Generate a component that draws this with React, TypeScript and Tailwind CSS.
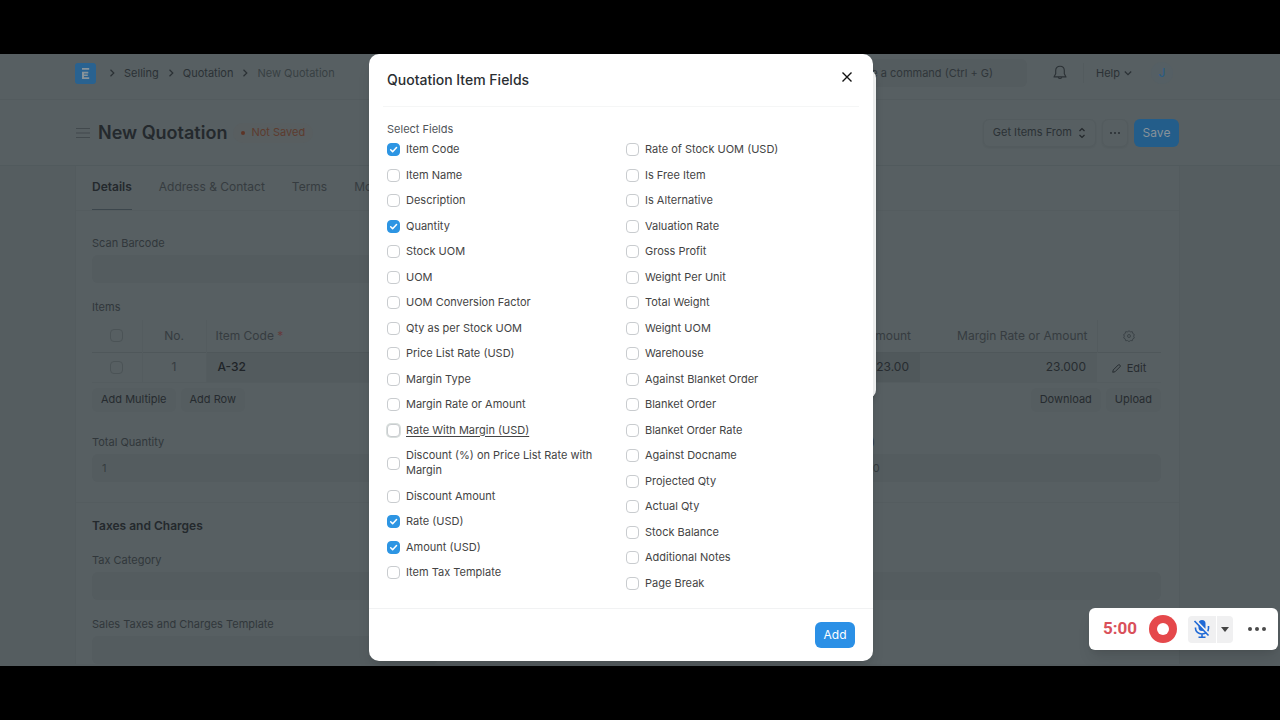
import { useState } from "react";
import type { ReactNode } from "react";

type Field = { label: string; checked?: boolean; hovered?: boolean };

const LEFT_FIELDS: Field[] = [
    { label: "Item Code", checked: true },
    { label: "Item Name" },
    { label: "Description" },
    { label: "Quantity", checked: true },
    { label: "Stock UOM" },
    { label: "UOM" },
    { label: "UOM Conversion Factor" },
    { label: "Qty as per Stock UOM" },
    { label: "Price List Rate (USD)" },
    { label: "Margin Type" },
    { label: "Margin Rate or Amount" },
    { label: "Rate With Margin (USD)", hovered: true },
    { label: "Discount (%) on Price List Rate with Margin" },
    { label: "Discount Amount" },
    { label: "Rate (USD)", checked: true },
    { label: "Amount (USD)", checked: true },
    { label: "Item Tax Template" },
];

const RIGHT_FIELDS: Field[] = [
    { label: "Rate of Stock UOM (USD)" },
    { label: "Is Free Item" },
    { label: "Is Alternative" },
    { label: "Valuation Rate" },
    { label: "Gross Profit" },
    { label: "Weight Per Unit" },
    { label: "Total Weight" },
    { label: "Weight UOM" },
    { label: "Warehouse" },
    { label: "Against Blanket Order" },
    { label: "Blanket Order" },
    { label: "Blanket Order Rate" },
    { label: "Against Docname" },
    { label: "Projected Qty" },
    { label: "Actual Qty" },
    { label: "Stock Balance" },
    { label: "Additional Notes" },
    { label: "Page Break" },
];

function FieldCheck({ field }: { field: Field }) {
    const [on, setOn] = useState(!!field.checked);
    return (
        <label className="flex items-center gap-[6px] text-[11px] leading-[15px] text-[#444]">
            <span className="relative flex size-[13px] shrink-0">
                <input
                    type="checkbox"
                    checked={on}
                    onChange={() => setOn(!on)}
                    className={
                        "peer size-[13px] appearance-none rounded-[4px] border border-[#c9cccf] bg-white checked:border-[#2d95e3] checked:bg-[#2d95e3]" +
                        (field.hovered ? " ring-1 ring-[#d9dfdd]" : "")
                    }
                />
                <svg viewBox="0 0 12 12" className="pointer-events-none absolute inset-0 hidden size-[13px] peer-checked:block" fill="none" stroke="#fff" strokeWidth="1.4" strokeLinecap="round" strokeLinejoin="round">
                    <path d="M3.4 6.3l1.8 1.8l3.6-4" />
                </svg>
            </span>
            <span className={field.hovered ? "underline underline-offset-2" : ""}>{field.label}</span>
        </label>
    );
}

function Chevron() {
    return (
        <svg viewBox="0 0 8 8" className="size-2" fill="none" stroke="#2b3135" strokeWidth="1.2">
            <path d="M2.5 0.8L5.8 4L2.5 7.2" />
        </svg>
    );
}

function FormField({ id, label, value }: { id: string; label: string; value?: string }) {
    return (
        <div className="flex flex-col gap-1">
            <label htmlFor={id} className="text-[11px] leading-4 text-[#31373b]">{label}</label>
            <input id={id} defaultValue={value} className="h-7 w-full rounded-md bg-[#545c5f] px-[10px] text-[11px] text-[#363c40]" />
        </div>
    );
}

function GridButton({ children }: { children: ReactNode }) {
    return <button className="h-6 rounded-md bg-[#555d60] px-[9px] text-[11px] text-[#262b2f]">{children}</button>;
}

function RowCheck({ label }: { label: string }) {
    return <input type="checkbox" aria-label={label} className="mx-auto block size-[13px] appearance-none rounded-[4px] border border-[#4b5356]" />;
}

function Navbar() {
    return (
        <nav className="flex h-[46px] items-center border-b border-[#535b5e] bg-[#575f62] pr-[100px] pb-[7px] pl-[75px] text-[11px] text-[#2b3135]">
            <a href="#home" aria-label="Home" className="mr-3">
                <svg viewBox="0 0 21 21" className="size-[21px]">
                    <rect width="21" height="21" rx="3" fill="#296290" />
                    <path d="M7 5h7.2v1.8H7zM7 8.8h6.3v1.8H9v3.6h5.2V16H7zM9 11.4h3.8v1.5H9z" fill="#87939a" />
                </svg>
            </a>
            <div className="flex items-center gap-2">
                <Chevron />
                <a href="#selling">Selling</a>
                <Chevron />
                <a href="#quotation">Quotation</a>
                <Chevron />
                <a href="#new" className="text-[#383f43]">New Quotation</a>
            </div>
            <div className="ml-auto flex items-center">
                <div className="mr-[26px] flex h-7 w-[250px] items-center justify-end rounded-md bg-[#545c5f] pr-[34px] text-[#30363a]">
                    <span>Search or type a command (Ctrl + G)</span>
                </div>
                <button aria-label="Notifications">
                    <svg viewBox="0 0 14 16" className="h-4 w-[14px]" fill="none" stroke="#2b3135" strokeWidth="1.1" strokeLinejoin="round">
                        <path d="M7 1.2c-2.6 0-4.3 1.8-4.3 4.2v3.4L1 11.9h12l-1.7-3.1V5.4C11.3 3 9.6 1.2 7 1.2z" />
                        <path d="M5.3 12.1a1.75 1.9 0 0 0 3.4 0" />
                    </svg>
                </button>
                <span className="mr-3 ml-4 h-5 border-l border-[#535b5e]" />
                <button className="flex items-center gap-1">
                    Help
                    <svg viewBox="0 0 8 8" className="size-2" fill="none" stroke="#2b3135" strokeWidth="1.2">
                        <path d="M0.8 2.5L4 5.7L7.2 2.5" />
                    </svg>
                </button>
                <span className="mr-[7px] ml-[19px] flex size-[22px] items-center justify-center rounded-full bg-[#555f64] text-[12px] text-[#265c88]">J</span>
            </div>
        </nav>
    );
}

function PageHead() {
    return (
        <header className="flex h-[66px] items-center border-b border-[#515a5d] bg-[#575f62] pr-[101px] pl-[76px]">
            <button aria-label="Toggle sidebar" className="mr-2">
                <svg viewBox="0 0 14 12" className="h-3 w-[14px]" stroke="#42494d" strokeWidth="1.2">
                    <path d="M0 1.5h14M0 6h14M0 10.5h14" />
                </svg>
            </button>
            <h1 className="text-lg leading-5 font-semibold text-[#24292d]">New Quotation</h1>
            <span className="ml-[6px] flex h-5 items-center gap-[6px] rounded-full bg-[#585e60] px-2 text-[11px] text-[#5d3b2e]">
                <span className="size-1 rounded-full bg-[#5d3426]" />
                Not Saved
            </span>
            <div className="ml-auto flex items-center gap-[6px] text-xs text-[#2b3135]">
                <button className="flex h-7 items-center gap-[6px] rounded-md border border-[#535b5e] px-[9px] text-[11px] shadow-xs">
                    Get Items From
                    <svg viewBox="0 0 8 12" className="h-3 w-2" fill="none" stroke="#23282c" strokeWidth="1.2">
                        <path d="M1.5 4L4 1.5L6.5 4M1.5 8L4 10.5L6.5 8" />
                    </svg>
                </button>
                <button aria-label="Menu" className="flex h-7 w-[26px] items-center justify-center rounded-md border border-[#535b5e] shadow-xs">
                    <svg viewBox="0 0 10 2" className="h-[2px] w-[10px]" fill="#23282c">
                        <circle cx="1" cy="1" r="0.9" /><circle cx="5" cy="1" r="0.9" /><circle cx="9" cy="1" r="0.9" />
                    </svg>
                </button>
                <button className="h-7 w-[45px] rounded-md bg-[#235d8a] text-[#87929a]">Save</button>
            </div>
        </header>
    );
}

function ItemsTable() {
    return (
        <table className="w-full table-fixed border-collapse text-[12px] text-[#363c40]">
            <colgroup>
                <col className="w-[50px]" />
                <col className="w-[64px]" />
                <col />
                <col className="w-[177px]" />
                <col className="w-[177px]" />
                <col className="w-16" />
            </colgroup>
            <thead>
                <tr className="h-8 border-b border-[#4f575a]">
                    <th className="border-r border-[#545c5f]"><RowCheck label="Select all" /></th>
                    <th className="border-r border-[#545c5f] font-normal">No.</th>
                    <th className="px-[9px] text-left font-normal">Item Code <span className="text-[#653a3b]">*</span></th>
                    <th className="px-[9px] text-right font-normal">Amount</th>
                    <th className="px-[9px] text-right font-normal">Margin Rate or Amount</th>
                    <th className="border-l border-[#535b5e]">
                        <svg viewBox="0 0 24 24" className="mx-auto size-3" fill="none" stroke="#383f43" strokeWidth="1.7" strokeLinejoin="round">
                            <path d="M12 1.5l3 2.2l3.7-.3l.9 3.6l3.1 2l-1.4 3.4l1.4 3.4l-3.1 2l-.9 3.6l-3.7-.3l-3 2.2l-3-2.2l-3.7.3l-.9-3.6l-3.1-2l1.4-3.4l-1.4-3.4l3.1-2l.9-3.6l3.7.3z" />
                            <circle cx="12" cy="12" r="3" />
                        </svg>
                    </th>
                </tr>
            </thead>
            <tbody>
                <tr className="h-[30px] border-b border-[#545c5f]">
                    <td className="border-r border-[#545c5f]"><RowCheck label="Select row 1" /></td>
                    <td className="border-r border-[#545c5f] text-center">1</td>
                    <td className="bg-[#535b5e] px-[11px] font-medium text-[#1f2428]">A-32</td>
                    <td className="bg-[#50585b] px-[11px] text-right text-[#272c30]">$ 23.00</td>
                    <td className="bg-[#545c5f] px-[11px] text-right text-[#272c30]">23.000</td>
                    <td className="pt-1 text-center text-[11px] text-[#272c30]">
                        <button className="inline-flex items-center gap-[6px]">
                            <svg viewBox="0 0 10 10" className="size-[9px]" fill="none" stroke="#23282c" strokeWidth="1" strokeLinejoin="round">
                                <path d="M0.8 9.2l.6-2.6L7 1q1-.6 1.8.2T9 3L3.4 8.6z" />
                            </svg>
                            Edit
                        </button>
                    </td>
                </tr>
            </tbody>
        </table>
    );
}

function QuotationForm() {
    return (
        <main className="mr-[100px] ml-[75px] border-x border-[#535b5e] bg-[#575f62]">
            <div className="flex h-[45px] gap-[27px] border-b border-[#545c5f] px-4 pr-[18px] text-[12px] text-[#363c40]">
                <a href="#details" className="flex items-center border-b border-[#3c464c] pb-[2px] font-semibold text-[#24292d]">Details</a>
                <a href="#address" className="flex items-center pb-[2px]">Address & Contact</a>
                <a href="#terms" className="flex items-center pb-[2px]">Terms</a>
                <a href="#more" className="flex items-center pb-[2px]">More Info</a>
            </div>
            <section className="px-4 pt-6 pr-[18px]">
                <div className="grid grid-cols-3 gap-x-4">
                    <FormField id="scan-barcode" label="Scan Barcode" />
                </div>
                <h2 className="mt-4 mb-[5px] text-[11px] leading-4 text-[#31373b]">Items</h2>
                <ItemsTable />
                <div className="mt-[5px] flex justify-between">
                    <div className="flex gap-[5px]">
                        <GridButton>Add Multiple</GridButton>
                        <GridButton>Add Row</GridButton>
                    </div>
                    <div className="flex gap-[5px]">
                        <GridButton>Download</GridButton>
                        <GridButton>Upload</GridButton>
                    </div>
                </div>
                <div className="mt-[22px] grid grid-cols-3 gap-x-4">
                    <FormField id="total-qty" label="Total Quantity" value="1" />
                    <div className="col-start-3">
                        <FormField id="total" label="Total (USD)" value="$ 1,023.00" />
                    </div>
                </div>
            </section>
            <section className="mt-5 border-t border-[#545c5f] px-4 pt-[13px] pr-[18px]">
                <h2 className="text-[12px] leading-5 font-semibold text-[#24292d]">Taxes and Charges</h2>
                <div className="mt-4 grid grid-cols-3 gap-4">
                    <FormField id="tax-category" label="Tax Category" />
                    <div className="col-start-3">
                        <FormField id="incoterm" label="Incoterm" />
                    </div>
                    <div className="col-start-1">
                        <FormField id="tax-template" label="Sales Taxes and Charges Template" />
                    </div>
                </div>
            </section>
        </main>
    );
}

function FieldsDialog() {
    return (
        <div className="absolute inset-0 flex items-start justify-center pr-[38px]">
            <div className="relative">
                {/* row editor dialog, still open underneath */}
                <div className="absolute top-[16px] -right-[3px] h-[328px] w-10 rounded-lg bg-[#f4f5f5] shadow-md" />
                <div role="dialog" aria-labelledby="dialog-title" className="relative w-[504px] rounded-[10px] bg-white shadow-lg">
                    <div className="mx-[14px] flex h-[53px] items-center justify-between border-b border-[#f5f6f6] px-1 pb-[2px]">
                        <h2 id="dialog-title" className="text-[14px] font-medium text-[#2a2e31]">Quotation Item Fields</h2>
                        <button aria-label="Close" className="mr-[2px] pb-1">
                            <svg viewBox="0 0 12 12" className="size-3" stroke="#111" strokeWidth="1.4">
                                <path d="M1.5 1.5l9 9M10.5 1.5l-9 9" />
                            </svg>
                        </button>
                    </div>
                    <div className="px-[18px] pt-[14px] pb-[17px]">
                        <p className="text-[11px] leading-4 text-[#50555a]">Select Fields</p>
                        <div className="mt-[5px] grid grid-cols-[208px_1fr] gap-x-[31px]">
                            <div className="flex h-[438px] flex-col justify-between">
                                {LEFT_FIELDS.map((f) => <FieldCheck key={f.label} field={f} />)}
                            </div>
                            <div className="flex h-[449px] flex-col justify-between">
                                {RIGHT_FIELDS.map((f) => <FieldCheck key={f.label} field={f} />)}
                            </div>
                        </div>
                    </div>
                    <div className="flex h-[53px] items-center justify-end border-t border-[#f1f2f3] px-[18px]">
                        <button className="h-[26px] w-10 rounded-md bg-[#2b90e6] text-xs text-white">Add</button>
                    </div>
                </div>
            </div>
        </div>
    );
}

function Recorder() {
    return (
        <div className="absolute right-[2px] bottom-4 flex h-[42px] w-[189px] items-center rounded-md bg-white pl-[14px] shadow-lg">
            <span className="w-[46px] font-['Roboto'] text-[17px] font-bold text-[#d9505a]">5:00</span>
            <button aria-label="Stop recording" className="flex size-7 items-center justify-center rounded-full bg-[#e5484b]">
                <span className="size-3 rounded-full bg-white" />
            </button>
            <button aria-label="Unmute microphone" className="ml-[11px] flex h-[27px] w-7 items-center justify-center rounded-l-sm bg-[#f0f0f1]">
                <svg viewBox="0 0 18 20" className="h-5 w-[18px]" fill="none" stroke="#1f69d6" strokeWidth="1.6">
                    <rect x="5.5" y="1" width="7" height="11" rx="3.5" fill="#1f69d6" stroke="none" />
                    <path d="M2.5 8.5v1a6.5 5.5 0 0 0 13 0v-2.5M9 15v3M5.5 18.2h7" />
                    <path d="M3 1.5L17 16" stroke="#f0f0f1" strokeWidth="1.8" />
                    <path d="M1.5 2L15.5 16.5" />
                </svg>
            </button>
            <button aria-label="Microphone options" className="ml-px flex h-[27px] w-4 items-center justify-center rounded-r-sm bg-[#f0f0f1]">
                <svg viewBox="0 0 8 5" className="h-[5px] w-2" fill="#444"><path d="M0 0h8L4 5z" /></svg>
            </button>
            <button aria-label="More" className="ml-[14px]">
                <svg viewBox="0 0 20 4" className="h-1 w-5" fill="#4a4a4a">
                    <circle cx="3" cy="2" r="2" /><circle cx="10" cy="2" r="2" /><circle cx="17" cy="2" r="2" />
                </svg>
            </button>
        </div>
    );
}

export default function App() {
    return (
        <div className="flex h-screen flex-col bg-black py-[54px] font-['Inter',sans-serif]">
            <div className="relative min-h-0 flex-1 overflow-hidden bg-[#555d60]">
                <Navbar />
                <PageHead />
                <QuotationForm />
                <FieldsDialog />
                <Recorder />
            </div>
        </div>
    );
}
